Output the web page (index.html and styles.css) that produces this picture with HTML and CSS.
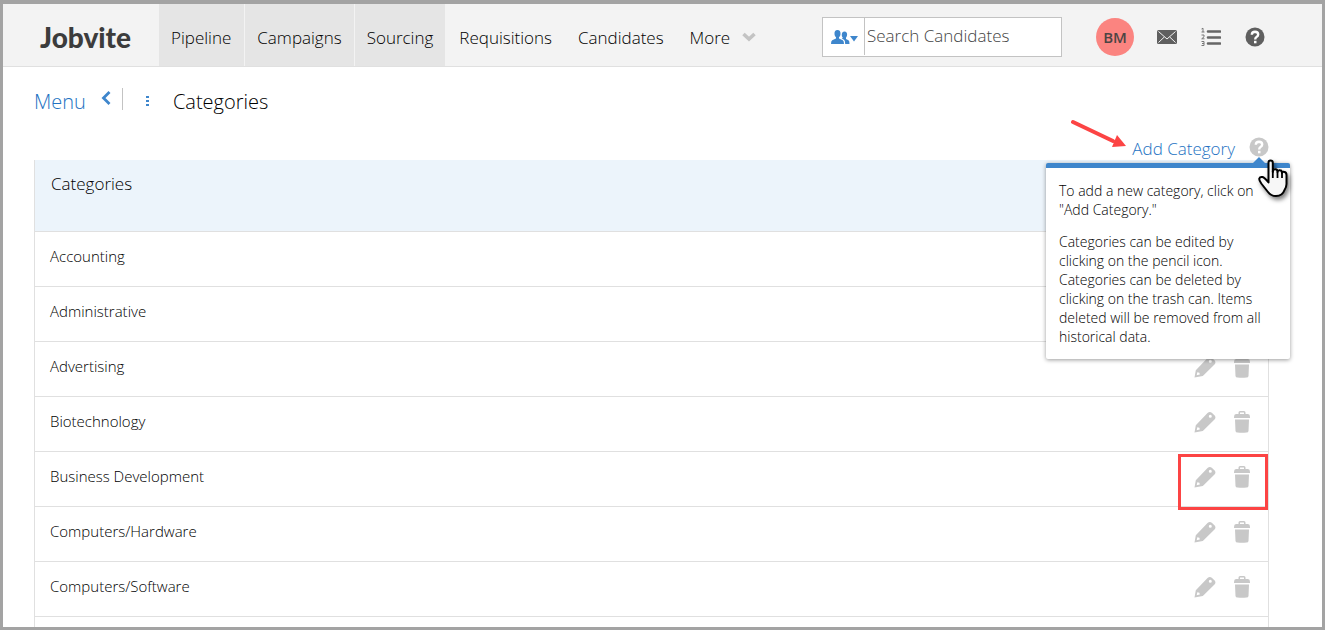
FILE: index.html
```html
<!DOCTYPE html>
<html lang="en">
<head>
    <meta charset="UTF-8">
    <meta name="viewport" content="width=device-width, initial-scale=1.0">
    <title>Categories</title>
    <link rel="stylesheet" href="styles.css">
</head>
<body>
    <!-- Shared icons -->
    <svg class="sprite" aria-hidden="true">
        <symbol id="icon-pencil" viewBox="0 0 22 22">
            <path fill-rule="evenodd" d="M0.5 21.5 L1.800 14.200 L13.500 2 Q15.800 .2 17.800 1.800 L20.700 4.600 Q22.300 6.500 20.500 8.500 L8.800 20 Z M14.800 5.200 a1.500 1.500 0 1 0 3 0 a1.500 1.500 0 1 0 -3 0 Z M3.300 16.200 L2.700 19.300 L5.800 18.600 L5.400 16.700 Z"/>
        </symbol>
        <symbol id="icon-trash" viewBox="0 0 16 22">
            <path fill-rule="evenodd" d="M4.500 3 V1.500 Q4.500 0 6 0 H10 Q11.500 0 11.500 1.500 V3 H14 Q16 3.200 16 6 V7 H0 V6 Q0 3.200 2 3 Z M6 3 H10 V1.500 H6 Z"/>
            <path d="M1 8.500 H15 L14.500 20 Q14.300 21.500 12.500 21.500 Q8 22.200 3.500 21.500 Q1.700 21.500 1.500 20 Z"/>
        </symbol>
        <symbol id="icon-help" viewBox="0 0 20 20">
            <circle cx="10" cy="10" r="9.500"/>
            <path d="M6.800 7.800 Q6.900 4.800 10 4.800 Q13.200 4.900 13.200 7.500 Q13.200 9 11.500 10 Q10.200 10.800 10.200 12.400" fill="none" stroke="#fff" stroke-width="2.400"/>
            <rect x="9" y="13.800" width="2.500" height="2.500" fill="#fff"/>
        </symbol>
    </svg>

    <header class="header">
        <a href="#" class="logo">Jobvite</a>
        <nav class="nav">
            <a href="#" class="nav-link tab">Pipeline</a>
            <a href="#" class="nav-link tab">Campaigns</a>
            <a href="#" class="nav-link tab">Sourcing</a>
            <a href="#" class="nav-link">Requisitions</a>
            <a href="#" class="nav-link">Candidates</a>
            <a href="#" class="nav-link more">More
                <svg width="14" height="10" viewBox="0 0 14 10"><path d="M1.500 2 L7 7 L12.500 2" fill="none" stroke="#c3c3c3" stroke-width="3.600"/></svg>
            </a>
        </nav>
        <form class="search">
            <button type="button" class="search-type" aria-label="Search type">
                <svg width="27" height="14" viewBox="0 0 27 14" fill="#3e86cc">
                    <path d="M6.500 0 C8.600 0 9.700 1.500 9.500 4 C9.400 5.700 8.700 6.700 8 7.300 V8.500 L11.800 10.200 Q13 10.800 13 14 H0 Q0 10.800 1.200 10.200 L5 8.500 V7.300 C4.300 6.700 3.600 5.700 3.500 4 C3.300 1.500 4.400 0 6.500 0 Z"/>
                    <path d="M13.500 1.500 C15.300 1.500 16.300 2.800 16.100 4.800 C16 6.300 15.500 7.200 15 7.600 V9 L17.500 10.200 Q18.500 10.800 18.500 14 H14.200 Q14.200 10.500 13 9.800 L11 8.800 L11.800 7.600 C11 7 10.700 5.800 10.800 4.500 C10.900 2.500 11.900 1.500 13.500 1.500 Z"/>
                    <path d="M19 6 H27 L23 11.500 Z"/>
                </svg>
            </button>
            <input type="text" class="search-input" placeholder="Search Candidates" aria-label="Search Candidates">
        </form>
        <div class="tools">
            <button type="button" class="avatar">BM</button>
            <button type="button" class="icon-btn" aria-label="Messages">
                <svg width="20" height="14" viewBox="0 0 20 14">
                    <rect width="20" height="14" rx="1.500" fill="#5f5f5f"/>
                    <path d="M1.500 1.500 L10 9 L18.500 1.500 M1.500 12.500 L7.300 7 M18.500 12.500 L12.700 7" fill="none" stroke="#f3f3f3"/>
                </svg>
            </button>
            <button type="button" class="icon-btn" aria-label="Tasks">
                <svg width="20" height="20" viewBox="0 0 20 20">
                    <path d="M7 4.500 H19 M7 10.500 H19 M7 16.500 H19" stroke="#666" stroke-width="2.600" stroke-linecap="round"/>
                    <path d="M0.500 2 L2 1.200 V5 M0.500 5 H3.500 M0.500 8 H3 V9.800 L0.700 11.800 H3.500 M0.500 14.500 H3 V18.500 H0.500 M1 16.500 H3" fill="none" stroke="#777"/>
                </svg>
            </button>
            <button type="button" class="icon-btn" aria-label="Help">
                <svg width="20" height="20" fill="#5f5f5f"><use href="#icon-help"/></svg>
            </button>
        </div>
    </header>

    <main class="content">
        <div class="breadcrumb">
            <a href="#" class="menu-link">Menu</a>
            <svg class="back" width="10" height="14" viewBox="0 0 10 14"><path d="M8.500 1 L2.500 7 L8.500 13" fill="none" stroke="#3e86cc" stroke-width="2.800"/></svg>
            <span class="divider"></span>
            <svg class="dots" width="3" height="11" viewBox="0 0 3 11" fill="#3e86cc"><path d="M0 0 h3 v2 h-3 Z M0 4 h3 v2 h-3 Z M0 8 h3 v2 h-3 Z"/></svg>
            <h1>Categories</h1>
        </div>

        <div class="toolbar">
            <a href="#" class="add-link">Add Category</a>
            <button type="button" class="icon-btn" aria-label="About categories">
                <svg width="20" height="20" fill="#c8c8c8"><use href="#icon-help"/></svg>
            </button>

            <svg class="arrow" width="56" height="30" viewBox="0 0 56 30" fill="#fc4444">
                <path d="M2 3 L42 22" stroke="#fc4444" stroke-width="4" stroke-linecap="round"/>
                <path d="M55 27 L41 28 L46 16 Z"/>
            </svg>

            <div class="popup" role="tooltip">
                <p>To add a new category, click on "Add Category."</p>
                <p>Categories can be edited by clicking on the pencil icon. Categories can be deleted by clicking on the trash can. Items deleted will be removed from all historical data.</p>
            </div>

            <svg class="cursor" width="34" height="44" viewBox="0 0 34 44">
                <path d="M10.500 3.500 Q10.500 1.500 12.500 1.500 Q14.800 1.500 14.800 3.800 V13 Q15 10 17.500 10.300 Q19.500 10.500 19.500 13 Q20 11 22 11.300 Q24 11.500 24 14 Q24.500 12.500 26 12.800 Q28.500 13.200 28.500 16 V25 Q28.500 28 26.500 31 Q24.500 37 18 37 Q13 37 10 33 Q6 28 3.300 24.500 Q0.800 21 1.300 19.500 Q2 17.500 4.500 18 Q6.500 18.500 10.500 23.500 Z" fill="#f7f7f7" stroke="#000" stroke-width="2" stroke-linejoin="round"/>
                <path d="M14.800 12 V19 M19.500 13 V19 M24 14 V19" stroke="#000" stroke-width="1.800"/>
            </svg>
        </div>

        <table class="categories">
            <thead>
                <tr><th>Categories</th><th></th></tr>
            </thead>
            <tbody id="category-rows"></tbody>
            <tfoot>
                <tr><td colspan="2"></td></tr>
            </tfoot>
        </table>
    </main>

    <script src="script.js"></script>
</body>
</html>
```

FILE: script.js
```javascript
const categories = [
    'Accounting',
    'Administrative',
    'Advertising',
    'Biotechnology',
    'Business Development',
    'Computers/Hardware',
    'Computers/Software'
];

const highlighted = 'Business Development';

document.getElementById('category-rows').innerHTML = categories.map(name => `
    <tr>
        <td>${name}</td>
        <td class="actions">
            <div class="action-buttons">
                <button type="button" class="icon-btn" aria-label="Edit ${name}">
                    <svg width="22" height="22"><use href="#icon-pencil"/></svg>
                </button>
                <button type="button" class="icon-btn" aria-label="Delete ${name}">
                    <svg width="16" height="22"><use href="#icon-trash"/></svg>
                </button>
            </div>
            ${name === highlighted ? '<span class="callout"></span>' : ''}
        </td>
    </tr>
`).join('');
```

FILE: styles.css
```css
* {
    margin: 0;
    padding: 0;
    box-sizing: border-box;
}

body {
    height: 100vh;
    overflow: hidden;
    border: 3px solid #a3a3a3;
    border-top-width: 4px;
    background: #fff;
    color: #000;
    font-family: "Open Sans", sans-serif;
    font-size: 17px;
    font-weight: 300;
}

a {
    color: #2372c2;
    text-decoration: none;
}

button {
    border: none;
    background: none;
    font-family: inherit;
    cursor: pointer;
}

svg {
    display: block;
    flex: none;
}

.sprite {
    position: absolute;
    width: 0;
    height: 0;
}

/* Header */
.header {
    display: flex;
    align-items: center;
    height: 63px;
    padding-right: 57px;
    background: #f3f3f3;
    border-bottom: 1px solid #e0e0e0;
}

.logo {
    width: 156px;
    padding: 4px 0 0 37px;
    color: #3c3c3c;
    font-family: Lato, sans-serif;
    font-size: 28px;
    font-weight: 900;
}

.nav {
    display: flex;
    align-self: stretch;
}

.nav-link {
    display: flex;
    align-items: center;
    padding: 4px 13px 0;
    color: #000;
}

.tab {
    padding: 4px 12px 0;
    background: #e5e5e5;
    border-right: 1px solid #f3f3f3;
}

.tab:first-child {
    padding-right: 13px;
}

.more {
    gap: 12px;
}

.search {
    display: flex;
    width: 240px;
    height: 40px;
    margin: 4px 34px 0 auto;
    background: #fff;
    border: 1px solid #c3c3c3;
}

.search-type {
    display: flex;
    align-items: center;
    width: 42px;
    height: 37px;
    padding-left: 8px;
    border-right: 1px solid #c3c3c3;
}

.search-input {
    flex: 1;
    min-width: 0;
    height: 34px;
    padding: 0 2px;
    border: none;
    outline: none;
    background: none;
    font-family: inherit;
    font-size: 17px;
    font-weight: 300;
}

.search-input::placeholder {
    color: #444;
}

.tools {
    display: flex;
    align-items: center;
    gap: 23px;
    margin-top: 4px;
}

.avatar {
    width: 38px;
    height: 38px;
    border-radius: 50%;
    background: #fb8480;
    color: #4c4444;
    font-size: 15px;
    font-weight: 600;
}

.icon-btn + .icon-btn {
    margin-left: 1px;
}

/* Breadcrumb */
.content {
    padding: 0 53px 0 31px;
}

.breadcrumb {
    display: flex;
    align-items: center;
    height: 70px;
    padding-bottom: 2px;
    font-size: 20px;
}

.back {
    margin: 0 11px 6px 15px;
}

.divider {
    width: 1px;
    height: 22px;
    margin-bottom: 4px;
    background: #c3c3c3;
}

.dots {
    margin: 0 24px 0 23px;
}

.breadcrumb h1 {
    font-size: 20px;
    font-weight: 330;
}

/* Toolbar */
.toolbar {
    position: relative;
    display: flex;
    align-items: flex-start;
    justify-content: flex-end;
    gap: 14px;
    height: 23px;
}

.add-link {
    line-height: 24px;
}

.arrow {
    position: absolute;
    top: -18px;
    right: 142px;
}

.popup {
    position: absolute;
    top: 26px;
    right: -21px;
    z-index: 1;
    width: 244px;
    padding: 13px;
    background: #fff;
    border-top: 5px solid #3e86cc;
    border-radius: 2px;
    box-shadow: 0 1px 4px rgba(0, 0, 0, 0.4);
    font-size: 14px;
    font-weight: 350;
    line-height: 19px;
}

.popup::before {
    content: "";
    position: absolute;
    top: -11px;
    right: 25px;
    border: 6px solid transparent;
    border-top: none;
    border-bottom-color: #3e86cc;
}

.popup p + p {
    margin-top: 13px;
}

.cursor {
    position: absolute;
    top: 22px;
    right: -23px;
    z-index: 2;
    filter: drop-shadow(2px 3px 2px rgba(0, 0, 0, 0.5));
}

/* Table */
.categories {
    width: 100%;
    border-collapse: separate;
    border-spacing: 0;
    border: 1px solid #e0e0e0;
    border-top: none;
}

.categories th {
    height: 72px;
    padding: 12px 16px;
    background: #ecf4fb;
    border-bottom: 1px solid #e0e0e0;
    font-weight: 300;
    line-height: 24px;
    text-align: left;
    vertical-align: top;
}

.categories td {
    height: 55px;
    padding: 12px 15px;
    border-bottom: 1px solid #e0e0e0;
    font-size: 15px;
    font-weight: 330;
    line-height: 24px;
    vertical-align: top;
}

.categories .actions {
    position: relative;
    width: 91px;
    padding: 14px 17px;
}

.action-buttons {
    display: flex;
    gap: 17px;
    fill: #c8c8c8;
}

.callout {
    position: absolute;
    top: 2px;
    right: 0;
    z-index: 1;
    width: 90px;
    height: 56px;
    border: 3px solid #fc4444;
    pointer-events: none;
}
```
